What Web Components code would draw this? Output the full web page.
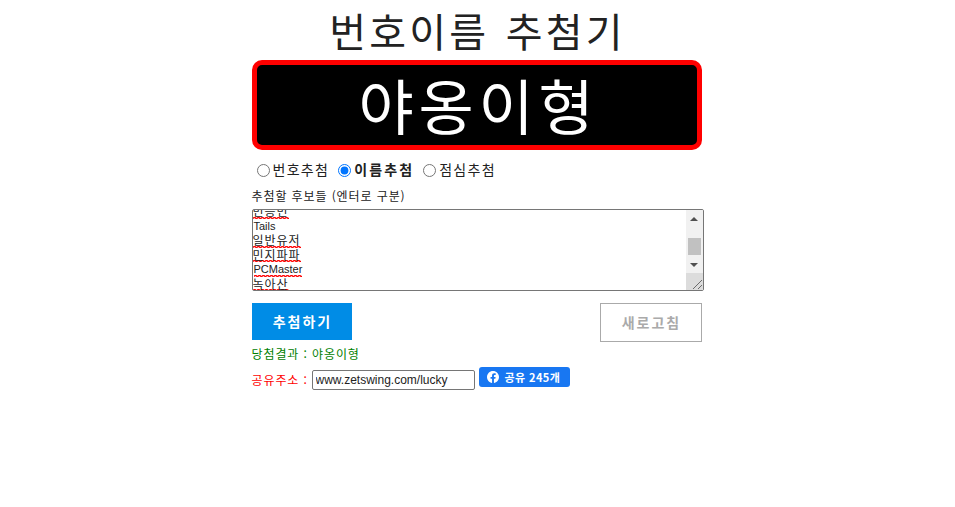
<!DOCTYPE html>
<html lang="ko">
<head>
<meta charset="utf-8">
<title>번호이름 추첨기</title>
<style>
  body { margin: 0; background: #fff; font-family: "Noto Sans CJK KR", sans-serif; }
</style>
</head>
<body>
<lucky-app>
  <lucky-title>번호이름 추첨기</lucky-title>
  <lucky-display>야옹이형</lucky-display>
  <lucky-options></lucky-options>
  <candidate-box></candidate-box>
  <lucky-actions></lucky-actions>
  <lucky-result>당첨결과 : 야옹이형</lucky-result>
  <share-row></share-row>
</lucky-app>

<script>
const FONT = '"Noto Sans CJK KR", sans-serif';
const LATIN = '"Liberation Sans", "Noto Sans CJK KR", sans-serif';
// spell check squiggle under the textarea rows
const SQUIGGLE = `url("data:image/svg+xml,%3Csvg xmlns='http://www.w3.org/2000/svg' width='4' height='2'%3E%3Cpath d='M0 1.5 1 .5h1l1 1h1' fill='none' stroke='%23f00' stroke-width='1.3'/%3E%3C/svg%3E")`;

class LuckyApp extends HTMLElement {
  constructor() {
    super();
    this.attachShadow({ mode: "open" }).innerHTML = `
      <style>
        :host { display: block; width: 450px; margin: 0 auto; position: relative; left: -1px; color: #222; }
      </style>
      <slot></slot>`;
  }
}

class LuckyTitle extends HTMLElement {
  constructor() {
    super();
    this.attachShadow({ mode: "open" }).innerHTML = `
      <style>
        :host { display: block; height: 60px; text-align: center; font: 400 40px/60px ${FONT}; letter-spacing: .08em; word-spacing: 2px; text-indent: 2px; color: #222; }
      </style>
      <slot></slot>`;
  }
}

class LuckyDisplay extends HTMLElement {
  constructor() {
    super();
    this.attachShadow({ mode: "open" }).innerHTML = `
      <style>
        :host { display: block; height: 90px; box-sizing: border-box; border: 5px solid #f00; border-radius: 10px; background: #000; color: #fff; text-align: center; font: 400 60px/78px ${FONT}; letter-spacing: .08em; text-indent: 4px; }
      </style>
      <slot></slot>`;
  }
}

class LuckyOptions extends HTMLElement {
  constructor() {
    super();
    const items = [["번호추첨", false], ["이름추첨", true], ["점심추첨", false]];
    this.attachShadow({ mode: "open" }).innerHTML = `
      <style>
        :host { display: flex; align-items: center; height: 40px; padding-left: 5px; font: 400 14px/20px ${FONT}; letter-spacing: 1.3px; color: #222; }
        label { display: flex; align-items: center; margin-right: 9px; }
        input { width: 13px; height: 13px; margin: 0 3px 0 0; accent-color: #0075ff; }
        span { margin-bottom: 2px; }
        .on { font-weight: 700; letter-spacing: 2.1px; }
      </style>
      ${items.map(([t, on]) => `<label class="${on ? "on" : ""}"><input type="radio" name="mode" ${on ? "checked" : ""}><span>${t}</span></label>`).join("")}`;
  }
}

class CandidateBox extends HTMLElement {
  constructor() {
    super();
    const names = [["민승민", 1, 0], ["Tails", 0, 1], ["일반유저", 1, 0], ["민지파파", 1, 0], ["PCMaster", 1, 1], ["녹아산", 1, 0]];
    this.attachShadow({ mode: "open" }).innerHTML = `
      <style>
        :host { display: block; color: #222; }
        .cap { font: 400 12px/18px ${FONT}; letter-spacing: .9px; height: 22px; margin-top: -3px; }
        .area { display: flex; height: 82px; width: 452px; box-sizing: border-box; border: 1px solid #767676; border-radius: 2px; overflow: hidden; background: #fff; }
        .view { flex: 1; overflow: hidden; font: 400 12px/14.5px ${FONT}; letter-spacing: 1px; }
        .list { margin-top: -6px; }
        .row { height: 14.5px; }
        .row span { display: inline-block; height: 14.5px; vertical-align: top; }
        .row .sp { background: ${SQUIGGLE} repeat-x left bottom; }
        .row .en { font: 400 11px/14.5px ${LATIN}; letter-spacing: 0; margin-left: 1px; }
        .bar { width: 17px; flex: none; display: flex; flex-direction: column; background: #f1f1f1; }
        .btn { height: 17px; display: flex; align-items: center; justify-content: center; flex: none; }
        .track { flex: 1; }
        .track i { display: block; margin: 11px 2px 0; height: 17px; background: #c1c1c1; }
        .corner { height: 17px; flex: none; background: #dcdcdc; }
        svg { display: block; }
      </style>
      <div class="cap">추첨할 후보들 (엔터로 구분)</div>
      <div class="area">
        <div class="view"><div class="list">
          ${names.map(([n, sp, en]) => `<div class="row"><span class="${sp ? "sp" : ""} ${en ? "en" : ""}">${n}</span></div>`).join("")}
        </div></div>
        <div class="bar">
          <div class="btn"><svg width="8" height="4" viewBox="0 0 8 4"><path d="M4 0 8 4H0z" fill="#505050"/></svg></div>
          <div class="track"><i></i></div>
          <div class="btn"><svg width="8" height="4" viewBox="0 0 8 4"><path d="M0 0h8L4 4z" fill="#505050"/></svg></div>
          <div class="corner"><svg width="17" height="17" viewBox="0 0 17 17"><path d="M7 16 16 7M12 16l4-4" stroke="#6b6b6b" stroke-width="1" fill="none"/></svg></div>
        </div>
      </div>`;
  }
}

class LuckyActions extends HTMLElement {
  constructor() {
    super();
    this.attachShadow({ mode: "open" }).innerHTML = `
      <style>
        :host { display: flex; justify-content: space-between; align-items: flex-start; margin-top: 12px; height: 39px; }
        button { font: 700 14px/20px ${FONT}; letter-spacing: 2px; box-sizing: border-box; cursor: pointer; padding: 0 0 2px 2px; border-radius: 0; }
        .go { width: 100px; height: 37px; border: 0; background: #008ce6; color: #fff; }
        .re { width: 102px; height: 39px; border: 1px solid #aaa; background: #fff; color: #aaa; }
      </style>
      <button class="go">추첨하기</button>
      <button class="re">새로고침</button>`;
  }
}

class LuckyResult extends HTMLElement {
  constructor() {
    super();
    this.attachShadow({ mode: "open" }).innerHTML = `
      <style>
        :host { display: block; height: 25px; font: 400 12px/24px ${FONT}; letter-spacing: .9px; color: #008000; }
      </style>
      <slot></slot>`;
  }
}

class FbShare extends HTMLElement {
  constructor() {
    super();
    this.attachShadow({ mode: "open" }).innerHTML = `
      <style>
        :host { display: inline-flex; align-items: center; gap: 6px; width: 91px; height: 20px; box-sizing: border-box; padding-left: 8px; background: #1877f2; border-radius: 3px; color: #fff; font: 700 11px/20px ${FONT}; letter-spacing: .4px; }
        svg { display: block; flex: none; }
      </style>
      <svg width="12" height="12" viewBox="0 0 16 16"><path fill="#fff" d="M16 8.05C16 3.6 12.4 0 8 0S0 3.6 0 8.05c0 4 2.93 7.33 6.75 7.95v-5.6H4.72V8.05h2.03V6.27c0-2 1.2-3.12 3.02-3.12.88 0 1.8.16 1.8.16v1.97h-1.01c-1 0-1.31.62-1.31 1.25v1.52h2.22l-.35 2.35H9.25V16C13.07 15.38 16 12.05 16 8.05z"/></svg>
      <span>공유 245개</span>`;
  }
}

class ShareRow extends HTMLElement {
  constructor() {
    super();
    this.attachShadow({ mode: "open" }).innerHTML = `
      <style>
        :host { display: flex; align-items: flex-start; font: 400 12px/20px ${FONT}; letter-spacing: .9px; color: #f00; }
        .lab { width: 60px; margin-top: 3px; white-space: nowrap; }
        input { width: 163px; height: 20px; box-sizing: border-box; margin: 3px 4px 0 0; padding: 1px 3px; border: 1px solid #767676; border-radius: 2px; font: 400 12px/16px ${LATIN}; letter-spacing: 0; color: #222; background: #fff; }
      </style>
      <span class="lab">공유주소 :</span>
      <input type="text" value="www.zetswing.com/lucky">
      <fb-share></fb-share>`;
  }
}

customElements.define("lucky-app", LuckyApp);
customElements.define("lucky-title", LuckyTitle);
customElements.define("lucky-display", LuckyDisplay);
customElements.define("lucky-options", LuckyOptions);
customElements.define("candidate-box", CandidateBox);
customElements.define("lucky-actions", LuckyActions);
customElements.define("lucky-result", LuckyResult);
customElements.define("fb-share", FbShare);
customElements.define("share-row", ShareRow);
</script>
</body>
</html>
